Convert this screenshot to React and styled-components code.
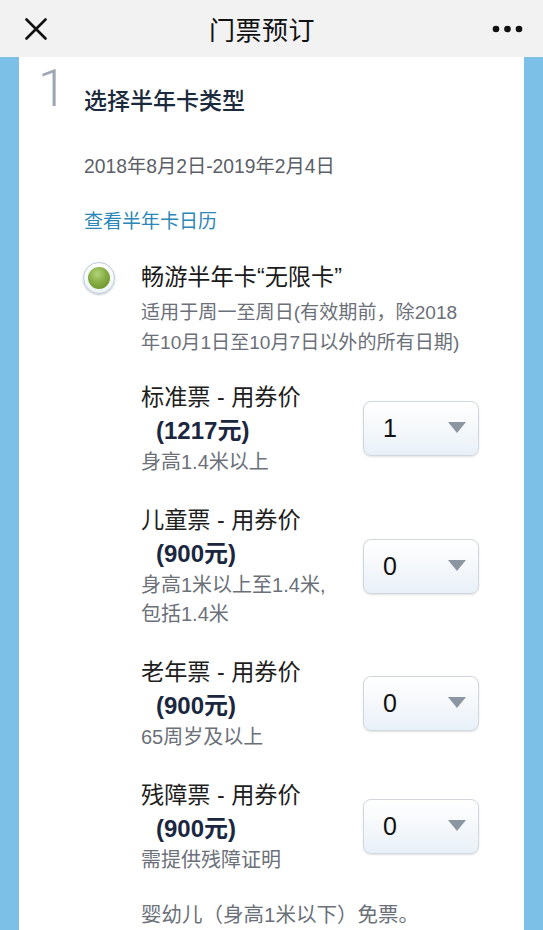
import React from 'react';
import styled, { createGlobalStyle } from 'styled-components';

const GlobalStyle = createGlobalStyle`
  html, body {
    margin: 0;
    padding: 0;
    background: #7cc0e7;
  }
  body {
    font-family: "Liberation Sans", "Noto Sans CJK SC", sans-serif;
  }
`;

const Page = styled.div`
  width: 543px;
  min-height: 930px;
  background: #7cc0e7;
  display: flex;
  flex-direction: column;
`;

const NavBar = styled.header`
  height: 57px;
  background: #f2f2f2;
  display: flex;
  align-items: center;
  justify-content: space-between;
  padding: 0 20px 0 25px;
  box-sizing: border-box;
`;

const NavButton = styled.button`
  border: 0;
  background: none;
  padding: 0;
  width: 31px;
  height: 24px;
  display: flex;
  align-items: center;
  justify-content: ${({ $right }) => ($right ? 'flex-end' : 'flex-start')};
`;

const NavTitle = styled.h1`
  margin: 0 24px 0 0;
  font-family: "Noto Sans CJK SC", sans-serif;
  font-size: 26px;
  font-weight: 400;
  color: #111;
  letter-spacing: 0.5px;
`;

const Main = styled.main`
  flex: 1;
  padding: 0 19px;
  display: flex;
`;

const Card = styled.section`
  flex: 1;
  background: #fff;
  padding: 0 45px 0 0;
`;

const StepHead = styled.div`
  display: flex;
  align-items: flex-start;
`;

const StepNumber = styled.div`
  width: 65px;
  padding-left: 19px;
  box-sizing: border-box;
  margin-top: 6px;
  font-family: Roboto, "DejaVu Sans", sans-serif;
  font-weight: 300;
  font-size: 52px;
  line-height: 1;
  color: #9ea7b3;
`;

const StepTitle = styled.h2`
  margin: 27px 0 0;
  font-family: "Noto Sans CJK SC", sans-serif;
  font-size: 23px;
  font-weight: 500;
  line-height: 30px;
  color: #1b2a3d;
`;

const Body = styled.div`
  padding-left: 65px;
  display: flex;
  flex-direction: column;
`;

const Period = styled.div`
  margin-top: 37px;
  font-size: 19.3px;
  line-height: 30px;
  color: #5b6068;
`;

const CalendarLink = styled.a`
  margin-top: 23px;
  font-family: "Noto Sans CJK SC", sans-serif;
  font-size: 19px;
  line-height: 30px;
  color: #2b87b8;
  text-decoration: none;
`;

const Option = styled.div`
  margin-top: 27px;
  display: flex;
  align-items: flex-start;
  gap: 26px;
`;

const Radio = styled.span`
  flex: none;
  width: 32px;
  height: 32px;
  margin-left: -1px;
  margin-top: 0;
  border-radius: 50%;
  box-sizing: border-box;
  background: linear-gradient(#ffffff, #eef3f7);
  border: 1px solid #bccad8;
  box-shadow: 0 1px 2px rgba(60, 80, 100, 0.3);
  display: flex;
  align-items: center;
  justify-content: center;

  &::after {
    content: '';
    width: 22px;
    height: 22px;
    border-radius: 50%;
    background: radial-gradient(circle at 42% 32%, #b3d47a 0%, #86ad44 45%, #5f8a24 100%);
  }
`;

const OptionText = styled.div`
  flex: 1;
  display: flex;
  flex-direction: column;
`;

const OptionName = styled.div`
  font-size: 23.2px;
  line-height: 30px;
  color: #1a1a1a;
`;

const OptionDesc = styled.div`
  margin-top: 6px;
  font-size: 19.1px;
  line-height: 30px;
  color: #6b7079;
`;

const TicketList = styled.div`
  margin-top: 22px;
  display: flex;
  flex-direction: column;
  gap: 26px;
`;

const TicketRow = styled.div`
  display: flex;
  align-items: center;
  justify-content: space-between;
`;

const TicketInfo = styled.div`
  display: flex;
  flex-direction: column;
`;

const TicketLabel = styled.div`
  font-size: 23.2px;
  line-height: 34px;
  color: #1e1e1e;
`;

const TicketPrice = styled.div`
  padding-left: 15px;
  font-size: 24px;
  font-weight: 700;
  line-height: 34px;
  color: #1b2740;
`;

const TicketNote = styled.div`
  font-size: 20px;
  line-height: 29px;
  color: #6b7079;
`;

const Select = styled.div`
  flex: none;
  width: 116px;
  height: 55px;
  box-sizing: border-box;
  border: 1px solid #d0d7df;
  border-radius: 8px;
  background: linear-gradient(#ffffff 0%, #f5f8fb 50%, #e8f0f8 100%);
  box-shadow: 0 1px 2px rgba(0, 0, 0, 0.12);
  display: flex;
  align-items: center;
  justify-content: space-between;
  padding: 0 12px 0 19px;
  font-size: 25px;
  color: #111;
`;

const Caret = styled.span`
  width: 0;
  height: 0;
  border-left: 9px solid transparent;
  border-right: 9px solid transparent;
  border-top: 11px solid #8c96a3;
  margin-top: -2px;
`;

const FreeNote = styled.div`
  font-size: 20.5px;
  line-height: 28px;
  color: #6b7079;
`;

const tickets = [
  { label: '标准票 - 用券价', price: '(1217元)', note: ['身高1.4米以上'], qty: 1 },
  { label: '儿童票 - 用券价', price: '(900元)', note: ['身高1米以上至1.4米,', '包括1.4米'], qty: 0 },
  { label: '老年票 - 用券价', price: '(900元)', note: ['65周岁及以上'], qty: 0 },
  { label: '残障票 - 用券价', price: '(900元)', note: ['需提供残障证明'], qty: 0 },
];

const App = () => (
  <>
    <GlobalStyle />
    <Page>
      <NavBar>
        <NavButton aria-label="关闭">
          <svg width="22" height="22" viewBox="0 0 22 22">
            <path d="M1.5 1.5 L20.5 20.5 M20.5 1.5 L1.5 20.5" stroke="#111" strokeWidth="2.6" strokeLinecap="round" />
          </svg>
        </NavButton>
        <NavTitle>门票预订</NavTitle>
        <NavButton $right aria-label="更多">
          <svg width="31" height="8" viewBox="0 0 31 8">
            <circle cx="4" cy="4" r="3.3" fill="#111" />
            <circle cx="15.5" cy="4" r="3.3" fill="#111" />
            <circle cx="27" cy="4" r="3.3" fill="#111" />
          </svg>
        </NavButton>
      </NavBar>

      <Main>
        <Card>
          <StepHead>
            <StepNumber>1</StepNumber>
            <StepTitle>选择半年卡类型</StepTitle>
          </StepHead>

          <Body>
            <Period>2018年8月2日-2019年2月4日</Period>
            <CalendarLink href="#">查看半年卡日历</CalendarLink>

            <Option>
              <Radio />
              <OptionText>
                <OptionName>畅游半年卡“无限卡”</OptionName>
                <OptionDesc>
                  适用于周一至周日(有效期前，除2018
                  <br />
                  年10月1日至10月7日以外的所有日期)
                </OptionDesc>

                <TicketList>
                  {tickets.map((t) => (
                    <TicketRow key={t.label}>
                      <TicketInfo>
                        <TicketLabel>{t.label}</TicketLabel>
                        <TicketPrice>{t.price}</TicketPrice>
                        {t.note.map((n) => (
                          <TicketNote key={n}>{n}</TicketNote>
                        ))}
                      </TicketInfo>
                      <Select>
                        {t.qty}
                        <Caret />
                      </Select>
                    </TicketRow>
                  ))}
                  <FreeNote>婴幼儿（身高1米以下）免票。</FreeNote>
                </TicketList>
              </OptionText>
            </Option>
          </Body>
        </Card>
      </Main>
    </Page>
  </>
);

export default App;
